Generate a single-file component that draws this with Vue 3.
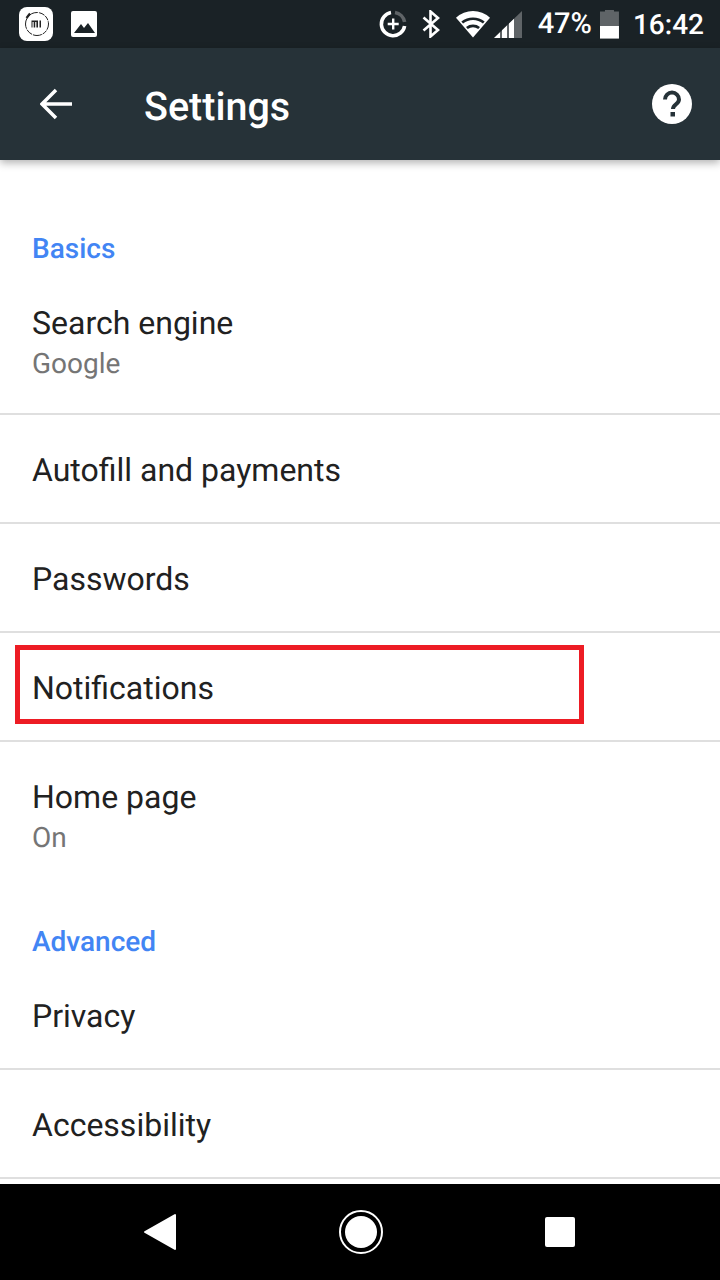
<template>
  <div class="phone">
    <div class="status-bar">
      <div class="status-left">
        <div class="mi-icon">
          <svg width="34" height="34" viewBox="0 0 34 34">
            <circle cx="18" cy="17" r="11.500" fill="none" stroke="#222" stroke-width="1" stroke-dasharray="6 1 5 1 9 1 7 1 11 1 12 1" />
            <path d="M7.500 11 L11 6.500" stroke="#222" stroke-width="2.200" fill="none" />
            <path d="M12.500 13.500h6.500v7h-1.600v-5.400h-1.200v5.400h-1.500v-5.400h-1.200v5.400h-1zM20.500 13.500h1.500v7h-1.500z" fill="#222" />
          </svg>
        </div>
        <svg class="image-icon" width="26" height="26" viewBox="0 0 26 26">
          <rect width="26" height="26" rx="2" fill="#fff" />
          <path d="M3 22 L10 13 L13 17 L17 12 L24 22Z" fill="#1a2226" />
        </svg>
      </div>
      <div class="status-right">
        <svg class="saver" width="28" height="28" viewBox="0 0 28 28">
          <path d="M16 2.500 A11.700 11.700 0 0 1 25.600 12" fill="none" stroke="#5f6467" stroke-width="3.600" />
          <path d="M25.600 16 A11.700 11.700 0 1 1 12 2.500" fill="none" stroke="#fff" stroke-width="3.600" />
          <path d="M13 8.500h2.400v4.300h4.300v2.400h-4.300v4.300H13v-4.300H8.700v-2.400H13z" fill="#fff" />
        </svg>
        <svg class="bt" width="19" height="28" viewBox="0 0 19 28">
          <path d="M1.500 7.500 L16 20 L8.500 26.500 V1.500 L16 8 L1.500 20.500" fill="none" stroke="#fff" stroke-width="2.600" />
        </svg>
        <svg class="wifi" width="34" height="28" viewBox="0 0 35 28">
          <path d="M0 7.500 A26 26 0 0 1 35 7.500 L17.500 28Z" fill="#fff" />
          <path d="M5.500 11.500 A19 19 0 0 1 29.500 11.500 L27.700 13.600 A16 16 0 0 0 7.300 13.600Z" fill="#1a2226" />
          <path d="M10.300 17 A12 12 0 0 1 24.700 17 L22.900 19.100 A9.500 9.500 0 0 0 12.100 19.100Z" fill="#1a2226" />
        </svg>
        <svg class="signal" width="28" height="27" viewBox="0 0 28 27">
          <path d="M0 27 L28 0 V27Z" fill="#5f6467" />
          <path d="M0 27 L6 21.200 V27Z M8 19.300 L13 14.500 V27H8Z M15 12.600 L20 7.700 V27H15Z" fill="#fff" />
        </svg>
        <span class="pct">47%</span>
        <div class="battery"><div class="battery-fill"></div></div>
        <span class="clock">16:42</span>
      </div>
    </div>

    <header class="toolbar">
      <svg class="back" width="32" height="32" viewBox="0 0 32 32">
        <path d="M32 16 H3 M16 2 L2 16 L16 30" fill="none" stroke="#fff" stroke-width="3.500" />
      </svg>
      <h1>Settings</h1>
      <svg class="help" width="40" height="40" viewBox="0 0 40 40">
        <circle cx="20" cy="20" r="20" fill="#fff" />
        <path d="M13 15.500 A7 7 0 0 1 27 15.500 C27 20 21 20.500 21 25" fill="none" stroke="#263238" stroke-width="4" />
        <rect x="18.500" y="28" width="4.500" height="4.500" fill="#263238" />
      </svg>
    </header>

    <main class="content">
      <template v-for="item in items" :key="item.title">
        <div v-if="item.section" class="section" :class="{ first: item.first }">{{ item.title }}</div>
        <div v-else class="row" :class="{ 'no-line': item.noLine, tall: item.sub }">
          <div class="title">{{ item.title }}</div>
          <div v-if="item.sub" class="sub">{{ item.sub }}</div>
          <div v-if="item.marked" class="marker"></div>
        </div>
      </template>
    </main>

    <nav class="nav-bar">
      <svg width="34" height="38" viewBox="0 0 34 38">
        <path d="M32 2 V36 L2 19Z" fill="#fff" stroke="#fff" stroke-width="2" stroke-linejoin="round" />
      </svg>
      <svg width="44" height="44" viewBox="0 0 44 44">
        <circle cx="22" cy="22" r="21" fill="none" stroke="#fff" stroke-width="2" />
        <circle cx="22" cy="22" r="16" fill="#fff" />
      </svg>
      <div class="square"></div>
    </nav>
  </div>
</template>

<script setup>
const items = [
  { title: 'Basics', section: true, first: true },
  { title: 'Search engine', sub: 'Google' },
  { title: 'Autofill and payments' },
  { title: 'Passwords' },
  { title: 'Notifications', marked: true },
  { title: 'Home page', sub: 'On', noLine: true },
  { title: 'Advanced', section: true },
  { title: 'Privacy' },
  { title: 'Accessibility' },
]
</script>

<style>
body { background: #fff; }
</style>

<style scoped>
.phone {
  width: 720px;
  height: 1280px;
  display: flex;
  flex-direction: column;
  overflow: hidden;
  font-family: Roboto, 'Liberation Sans', sans-serif;
  text-rendering: geometricPrecision;
  background: #fff;
}

.status-bar {
  height: 48px;
  flex-shrink: 0;
  background: #1a2226;
  display: flex;
  align-items: center;
  justify-content: space-between;
  color: #fff;
}
.status-left { display: flex; align-items: center; margin-left: 19px; gap: 18px; }
.mi-icon { width: 34px; height: 34px; background: #fff; border-radius: 8px; }
.mi-icon svg, .image-icon { display: block; }

.status-right { display: flex; align-items: center; margin-right: 16px; }
.saver { margin-right: 15px; }
.bt { margin-right: 15px; }
.wifi { margin-right: 4px; }
.signal { margin-right: 16px; }
.pct { font-size: 29px; font-weight: 500; margin-right: 8px; }
.battery {
  width: 19px;
  height: 29px;
  margin-right: 14px;
  background: #5f6467;
  clip-path: polygon(0 2px, 5px 2px, 5px 0, 14px 0, 14px 2px, 100% 2px, 100% 100%, 0 100%);
  display: flex;
  align-items: flex-end;
}
.battery-fill { width: 100%; height: 13px; background: #fff; }
.clock { font-size: 28px; font-weight: 500; }

.toolbar {
  height: 112px;
  flex-shrink: 0;
  background: #263238;
  display: flex;
  align-items: center;
  box-shadow: 0 3px 8px rgba(0, 0, 0, 0.3);
  position: relative;
  z-index: 1;
}
.back { margin-left: 40px; margin-right: 72px; }
h1 {
  margin: 0;
  padding-top: 5px;
  flex: 1;
  font-size: 39.500px;
  font-weight: 500;
  color: #fff;
}
.help { margin-right: 28px; }

.content { flex: 1; overflow: hidden; }

.section {
  height: 72px;
  padding: 35px 32px 0;
  box-sizing: border-box;
  font-size: 28px;
  font-weight: 500;
  line-height: 36px;
  color: #4285f4;
}
.section.first { height: 108px; padding-top: 71px; }

.row {
  position: relative;
  height: 109px;
  box-sizing: border-box;
  padding: 36px 32px 0;
  border-bottom: 2px solid #dfdfdf;
}
.row.tall { height: 147px; }
.row.no-line { border-bottom: none; }
.title { font-size: 32px; line-height: 38px; color: #212121; }
.sub { font-size: 28px; line-height: 36px; color: #757575; margin-top: 4px; }

.marker {
  position: absolute;
  left: 15px;
  top: 12px;
  width: 569px;
  height: 79px;
  box-sizing: border-box;
  border: 5px solid #ed1c24;
}

.nav-bar {
  height: 96px;
  flex-shrink: 0;
  background: #000;
  display: flex;
  align-items: center;
  padding: 0 145px 0 143px;
  justify-content: space-between;
}
.square { width: 30px; height: 30px; background: #fff; border-radius: 2px; }
</style>
